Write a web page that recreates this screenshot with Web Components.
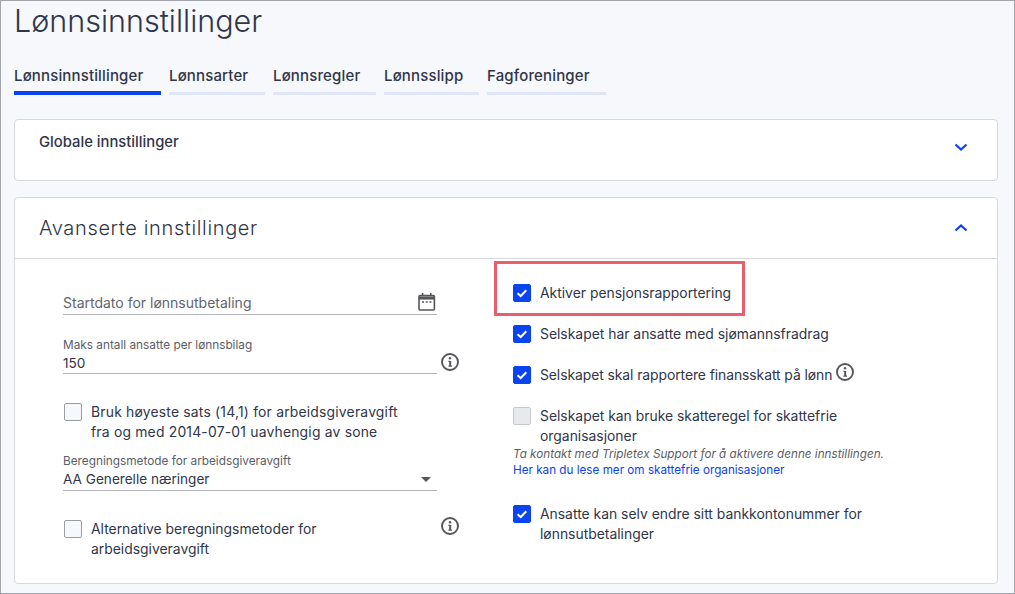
<!DOCTYPE html>
<html lang="nb">

<head>
    <meta charset="UTF-8">
    <title>Lønnsinnstillinger</title>
    <style>
        html, body { margin: 0; height: 100%; }
        body { font-family: Inter, "Noto Sans", sans-serif; color: #2f3649; background: #f7f8fc; }
    </style>
</head>

<body>
    <salary-page>
        <page-tabs slot="tabs">
            <tab-item active style="width:147px">Lønnsinnstillinger</tab-item>
            <tab-item style="width:96px">Lønnsarter</tab-item>
            <tab-item style="width:103px">Lønnsregler</tab-item>
            <tab-item style="width:95px">Lønnsslipp</tab-item>
            <tab-item style="width:119px">Fagforeninger</tab-item>
        </page-tabs>

        <panel-card heading="Globale innstillinger" small></panel-card>

        <panel-card heading="Avanserte innstillinger" open>
            <settings-grid>
                <div slot="left">
                    <text-field placeholder="Startdato for lønnsutbetaling" icon="calendar"></text-field>
                    <text-field label="Maks antall ansatte per lønnsbilag" value="150" help style="margin-top:23px"></text-field>
                    <check-row style="margin:28px 0 0 1px;width:345px;letter-spacing:.2px">Bruk høyeste sats (14,1) for arbeidsgiveravgift fra og med 2014-07-01 uavhengig av sone</check-row>
                    <text-field label="Beregningsmetode for arbeidsgiveravgift" value="AA Generelle næringer" icon="caret" style="margin-top:12px;--field-pad:2px"></text-field>
                    <check-row style="margin:28px 0 0 1px;width:270px" help>Alternative beregningsmetoder for arbeidsgiveravgift</check-row>
                </div>
                <div slot="right">
                    <check-row checked marked>Aktiver pensjonsrapportering</check-row>
                    <check-row checked style="margin-top:21px">Selskapet har ansatte med sjømannsfradrag</check-row>
                    <check-row checked inline-help style="margin-top:21px;letter-spacing:-.07px">Selskapet skal rapportere finansskatt på lønn</check-row>
                    <check-row disabled style="margin-top:21px;width:350px">Selskapet kan bruke skatteregel for skattefrie organisasjoner</check-row>
                    <hint-text>
                        <em>Ta kontakt med Tripletex Support for å aktivere denne innstillingen.</em>
                        <a href="#">Her kan du lese mer om skattefrie organisasjoner</a>
                    </hint-text>
                    <check-row checked style="margin-top:26px;width:380px">Ansatte kan selv endre sitt bankkontonummer for lønnsutbetalinger</check-row>
                </div>
            </settings-grid>
        </panel-card>
    </salary-page>
</body>

<script>
    const infoSvg = `<svg width="20" height="20" viewBox="0 0 20 20" fill="none" stroke="#55565a">
        <circle cx="10" cy="10" r="8" stroke-width="1.9"/>
        <path d="M10.2 9v5" stroke-width="2"/><path d="M8.4 9.3H10M8.4 14.2H12" stroke-width="1.3"/>
        <circle cx="10" cy="6.2" r="1.2" fill="#55565a" stroke="none"/></svg>`;

    class SalaryPage extends HTMLElement {
        constructor() {
            super();
            this.attachShadow({ mode: 'open' }).innerHTML = `
            <style>
                :host { display: block; box-sizing: border-box; width: 1015px; height: 594px; overflow: hidden;
                    border: 1px solid #a3a5ad; padding: 0 16px 0 13px; }
                h1 { margin: 0; padding-top: 2px; font: 300 30.5px/36px Inter, sans-serif; color: #2f3649; }
                .stack { display: flex; flex-direction: column; gap: 16px; }
            </style>
            <h1>Lønnsinnstillinger</h1>
            <slot name="tabs"></slot>
            <div class="stack"><slot></slot></div>`;
        }
    }

    class PageTabs extends HTMLElement {
        constructor() {
            super();
            this.attachShadow({ mode: 'open' }).innerHTML = `
            <style>
                :host { display: flex; gap: 8px; margin: 27px 0 24px; }
            </style>
            <slot></slot>`;
        }
    }

    class TabItem extends HTMLElement {
        constructor() {
            super();
            this.attachShadow({ mode: 'open' }).innerHTML = `
            <style>
                :host { display: block; box-sizing: border-box; height: 29px; padding-top: 1px; white-space: nowrap;
                    font: 500 15px/18px Inter, sans-serif; letter-spacing: .15px; color: #2f3649; border-bottom: 3px solid #e0e6f8; }
                :host([active]) { border-bottom: 4px solid #0a43f0; }
            </style>
            <slot></slot>`;
        }
    }

    class PanelCard extends HTMLElement {
        constructor() {
            super();
            let small = this.hasAttribute('small');
            let open = this.hasAttribute('open');
            this.attachShadow({ mode: 'open' }).innerHTML = `
            <style>
                :host { display: block; background: #fff; border: 1px solid #d8d9dd; border-radius: 4px; }
                header { display: flex; justify-content: space-between; box-sizing: border-box; height: 60px; padding: 0 29px 0 24px; }
                h2 { margin: 0; font-family: Inter, sans-serif; color: #2f3649; }
                .small { font-size: 14.8px; font-weight: 500; line-height: 18px; padding-top: 13px; }
                .big { font-size: 20px; font-weight: 300; letter-spacing: .65px; line-height: 60px; }
                svg { margin-top: ${open ? 23 : 20}px; }
                .body { border-top: 1px solid #d8d9dd; }
            </style>
            <header>
                <h2 class="${small ? 'small' : 'big'}">${this.getAttribute('heading')}</h2>
                <svg width="14" height="14" viewBox="0 0 14 14" fill="none" stroke="#0a43f0" stroke-width="2.2">
                    <path d="${open ? 'M1.5 9.5 7 4.5l5.5 5' : 'M1.5 4.5 7 9.5l5.5-5'}"/></svg>
            </header>
            ${open ? '<div class="body"><slot></slot></div>' : ''}`;
        }
    }

    class SettingsGrid extends HTMLElement {
        constructor() {
            super();
            this.attachShadow({ mode: 'open' }).innerHTML = `
            <style>
                :host { display: grid; grid-template-columns: 374px 1fr; column-gap: 76px;
                    height: 324px; box-sizing: border-box; padding: 24px 0 0 48px; }
            </style>
            <div><slot name="left"></slot></div>
            <div><slot name="right"></slot></div>`;
        }
    }

    class TextField extends HTMLElement {
        constructor() {
            super();
            let label = this.getAttribute('label');
            let icon = this.getAttribute('icon');
            let iconHtml = '';
            if (icon == 'calendar') {
                iconHtml = `<svg class="ic" width="20" height="20" viewBox="0 0 20 20" fill="none" stroke="#55565a">
                    <rect x="2" y="3.5" width="15.4" height="14.5" rx="1" stroke-width="1.6"/>
                    <path d="M2 6h15.4" stroke-width="3.2"/><path d="M5.6 1v3M13.8 1v3" stroke-width="1.6"/>
                    <path d="M5 10h2M8.7 10h2M12.4 10h2" stroke-width="1.5"/></svg>`;
            }
            if (icon == 'caret') {
                iconHtml = `<svg class="ic" width="20" height="20" viewBox="0 0 20 20"><path d="M4 9h10l-5 5z" fill="#55565a"/></svg>`;
            }
            this.attachShadow({ mode: 'open' }).innerHTML = `
            <style>
                :host { display: block; position: relative; width: 374px; }
                .box { position: relative; border-bottom: 1px solid #b4b6bb; padding-bottom: var(--field-pad, 1px); }
                label { display: block; font: 400 11.8px/15px Inter, sans-serif; color: #5a5d66; }
                .val { font: 400 13.6px/18px Inter, sans-serif; color: #2f3649; min-height: 18px; padding-top: 1px; }
                .ph { font-size: 14px; color: #62656e; padding-top: 11px; padding-bottom: 1px; }
                .ic { position: absolute; right: 0; bottom: 2px; }
                .help { position: absolute; left: 377px; bottom: 2px; width: 20px; height: 20px; }
            </style>
            <div class="box">
                ${label ? `<label>${label}</label>` : ''}
                <div class="val ${label ? '' : 'ph'}">${label ? this.getAttribute('value') : this.getAttribute('placeholder')}</div>
                ${iconHtml}
            </div>
            ${this.hasAttribute('help') ? `<div class="help">${infoSvg}</div>` : ''}`;
        }
    }

    class CheckRow extends HTMLElement {
        constructor() {
            super();
            let checked = this.hasAttribute('checked');
            this.attachShadow({ mode: 'open' }).innerHTML = `
            <style>
                :host { display: flex; position: relative; gap: 9px; font: 400 13.9px/20px Inter, sans-serif; color: #2f3649; }
                .box { flex: none; box-sizing: border-box; width: 18px; height: 18px; margin-top: 1px; border-radius: 2px;
                    border: 1px solid #9a9ca3; background: #f7f8fc; }
                :host([checked]) .box { background: #0a43f0; border-color: #0a43f0; }
                :host([disabled]) .box { background: #e8e9ec; border-color: #c6c7cb; }
                svg { display: block; }
                .help { position: absolute; left: 376px; top: -3px; width: 20px; height: 20px; }
                .inline { display: inline-block; width: 20px; height: 20px; vertical-align: top; margin: -3px 0 0 3px; }
                .mark { position: absolute; left: -19px; top: -22px; width: 251px; height: 55px; box-sizing: border-box;
                    border: 3px solid #e85f6e; pointer-events: none; }
            </style>
            <div class="box">${checked ? `<svg width="16" height="16" viewBox="0 0 16 16" fill="none" stroke="#fff" stroke-width="2"><path d="M3.5 8.2 6.7 11l5.6-5.8"/></svg>` : ''}</div>
            <div><slot></slot>${this.hasAttribute('inline-help') ? `<span class="inline">${infoSvg}</span>` : ''}</div>
            ${this.hasAttribute('help') ? `<div class="help">${infoSvg}</div>` : ''}
            ${this.hasAttribute('marked') ? '<div class="mark"></div>' : ''}`;
        }
    }

    class HintText extends HTMLElement {
        constructor() {
            super();
            this.attachShadow({ mode: 'open' }).innerHTML = `
            <style>
                :host { display: block; font: 400 11.7px/16px Inter, sans-serif; color: #5a5d66; }
                ::slotted(em), ::slotted(a) { display: block; }
                ::slotted(a) { color: #0a43f0; text-decoration: none; }
            </style>
            <slot></slot>`;
        }
    }

    window.customElements.define('salary-page', SalaryPage);
    window.customElements.define('page-tabs', PageTabs);
    window.customElements.define('tab-item', TabItem);
    window.customElements.define('panel-card', PanelCard);
    window.customElements.define('settings-grid', SettingsGrid);
    window.customElements.define('text-field', TextField);
    window.customElements.define('check-row', CheckRow);
    window.customElements.define('hint-text', HintText);
</script>

</html>
